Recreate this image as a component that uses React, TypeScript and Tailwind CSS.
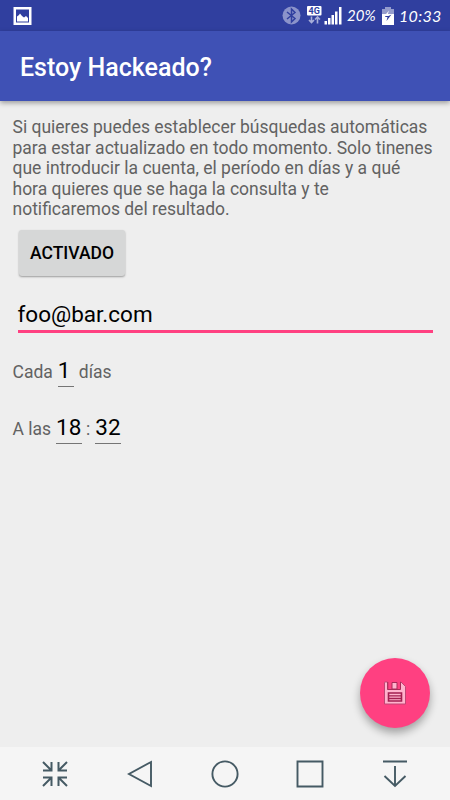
import React from 'react';

const DESCRIPTION = [
  'Si quieres puedes establecer búsquedas automáticas',
  'para estar actualizado en todo momento. Solo tinenes',
  'que introducir la cuenta, el período en días y a qué',
  'hora quieres que se haga la consulta y te',
  'notificaremos del resultado.',
];

function StatusBar() {
  return (
    <div className="flex h-[31px] shrink-0 items-center bg-[#303f9f] pl-[13px] pr-[9px] text-white">
      <svg width="19" height="18" viewBox="0 0 19 18" className="mt-px">
        <path fill="#fff" fillRule="evenodd" d="M.5 0h18v18H.5zM3 2.5v13h13v-13z" />
        <path fill="#fff" d="M4 14.5V9.500l2-1.500 1-1.500 2 2.500 2 1.500 2-1.500 2 2v3.500z" />
      </svg>

      <div className="ml-auto flex items-center">
        {/* Bluetooth */}
        <svg width="19" height="19" viewBox="0 0 19 19">
          <circle cx="9.500" cy="9.500" r="9" fill="#8b93ca" />
          <path d="M5 6l8 6.500-3.500 3.500V3l3.500 3.500L5 13" fill="none" stroke="#303f9f" strokeWidth="1.500" />
        </svg>
        {/* Mobile data */}
        <svg width="15" height="19" viewBox="0 0 15 19" className="ml-[6px]">
          <rect width="14.500" height="9.500" y="0" rx="1" fill="#fff" />
          <text x="7.200" y="8" textAnchor="middle" fontSize="9" fontWeight="700" fill="#303f9f" fontFamily="Roboto, sans-serif">
            4G
          </text>
          <path d="M4.500 10.500v6.500M2 14l2.500 2.500L7 14M10.500 17.500v-6.500M8 13.500l2.500-2.500 2.500 2.500" fill="none" stroke="#a7aed9" strokeWidth="1.600" />
        </svg>
        <svg width="18" height="19" viewBox="0 0 18 19" className="ml-[2px]" fill="#fff">
          <path d="M.5 15H3v3.500H.5zM4 12h2.500v6.500H4zM7.500 9H10v9.500H7.500zM11 5.500h2.500v13H11zM15 1h2.500v17.500H15z" />
        </svg>
        <span className="ml-[5px] w-[30px] whitespace-nowrap font-['Lato',sans-serif] text-[15px] italic leading-none">20%</span>
        <svg width="12" height="18" viewBox="0 0 12 18" className="ml-[5px]">
          <path fill="#949ccc" d="M3 0h6v2h3v6H0V2h3z" />
          <path fill="#fff" d="M0 7h12v11H0z" />
          <path fill="#fff" d="M7 3.500L2 9.500h3z" />
          <path fill="#303f9f" d="M9.500 7.500L4.500 14 5.500 10H3l.5-1h3z" />
        </svg>
        <span className="ml-[5px] w-[42px] whitespace-nowrap font-['Lato',sans-serif] text-[16px] italic leading-none tracking-[0.3px]">10:33</span>
      </div>
    </div>
  );
}

function NavBar() {
  return (
    <div className="flex h-[53px] shrink-0 items-center justify-between bg-[#f5f5f5] px-[40px] text-[#455a64]">
      <svg width="30" height="30" viewBox="0 0 30 30" fill="none" stroke="currentColor" strokeWidth="2">
        <path d="M3 3l8 8M3 11.500h8.500V3M27 3l-8 8M18.500 3v8.500H27M3 27l8-8M3 18.500h8.500V27M27 27l-8-8M18.500 27v-8.500H27" />
      </svg>
      <svg width="30" height="30" viewBox="0 0 30 30" fill="none" stroke="currentColor" strokeWidth="1.900">
        <path d="M26 3v24L4 15z" />
      </svg>
      <svg width="30" height="30" viewBox="0 0 30 30" fill="none" stroke="currentColor" strokeWidth="1.900">
        <circle cx="15" cy="15" r="12.600" />
      </svg>
      <svg width="30" height="30" viewBox="0 0 30 30" fill="none" stroke="currentColor" strokeWidth="1.900">
        <path d="M2.500 2.500h25v25h-25z" />
      </svg>
      <svg width="30" height="30" viewBox="0 0 30 30" fill="none" stroke="currentColor" strokeWidth="1.900">
        <path d="M3 2.500h24M15 7v20M4.500 17L15 27l10.500-10" />
      </svg>
    </div>
  );
}

export default function App() {
  return (
    <div className="relative flex h-[800px] w-[450px] flex-col overflow-hidden bg-[#eeeeee] font-['Roboto',sans-serif]">
      <StatusBar />

      <header className="z-10 flex h-[70px] shrink-0 items-center bg-[#3f51b5] pl-[20px] pt-[3px] shadow-[0_2px_5px_rgba(0,0,0,0.35)]">
        <h1 className="text-[25px] font-medium leading-none text-white">Estoy Hackeado?</h1>
      </header>

      <main className="flex flex-1 flex-col items-start px-[12.500px] pt-[16px] text-[17.500px] text-[#626262]">
        <p className="whitespace-nowrap leading-[20.600px]">
          {DESCRIPTION.map((line) => (
            <span key={line} className="block">{line}</span>
          ))}
        </p>

        <button className="ml-[6.500px] mt-[10px] h-[46px] w-[106px] rounded-[3px] bg-[#d6d7d7] text-[17.500px] font-medium text-black shadow-[0_1px_2px_rgba(0,0,0,0.35)]">
          ACTIVADO
        </button>

        <div className="ml-[5px] mt-[22px] h-[35px] w-[415px] border-b-[3px] border-[#ff4081] text-[22.500px] leading-[32px] text-black">
          foo@bar.com
        </div>

        <div className="mt-[23px] flex h-[32px] items-start leading-[32px]">
          <span>Cada</span>
          <span className="ml-[5px] h-[31px] w-[16px] border-b border-[#757575] text-[22.500px] leading-[29px] text-black">1</span>
          <span className="ml-[5px]">días</span>
        </div>

        <div className="mt-[25px] flex h-[32px] items-start leading-[32px]">
          <span>A las</span>
          <span className="ml-[5px] h-[31px] w-[26px] border-b border-[#757575] text-[22.500px] leading-[29px] text-black">18</span>
          <span className="ml-[4px]">:</span>
          <span className="ml-[5px] h-[31px] w-[26px] border-b border-[#757575] text-[22.500px] leading-[29px] text-black">32</span>
        </div>
      </main>

      {/* Floating save button */}
      <button className="absolute bottom-[72.500px] right-[20px] flex h-[70px] w-[70px] items-center justify-center rounded-full bg-[#ff4081] shadow-[0_5px_8px_rgba(0,0,0,0.32)]">
        <svg width="24" height="24" viewBox="0 0 24 24" fill="none">
          <path d="M1.500 1.500q0-.5.500-.5h2.500v7.500H17V1h1l4.500 4.500V23h-21z" fill="#ffb3cd" stroke="#c04674" />
          <path d="M5 1h12v7.500H5z" fill="#ff4081" />
          <path d="M4.800 1v7.500h12.700V1" stroke="#a92a58" />
          <path d="M9 1.500h5V8H9z" fill="#ffb3cd" stroke="#a92a58" />
          <path d="M5.500 12h13v8h-13z" fill="#ffb3cd" stroke="#a31f50" strokeWidth="1.600" />
          <path d="M6 14.800h12M6 17.500h12" stroke="#a31f50" strokeWidth="1.300" />
        </svg>
      </button>

      <NavBar />
    </div>
  );
}
